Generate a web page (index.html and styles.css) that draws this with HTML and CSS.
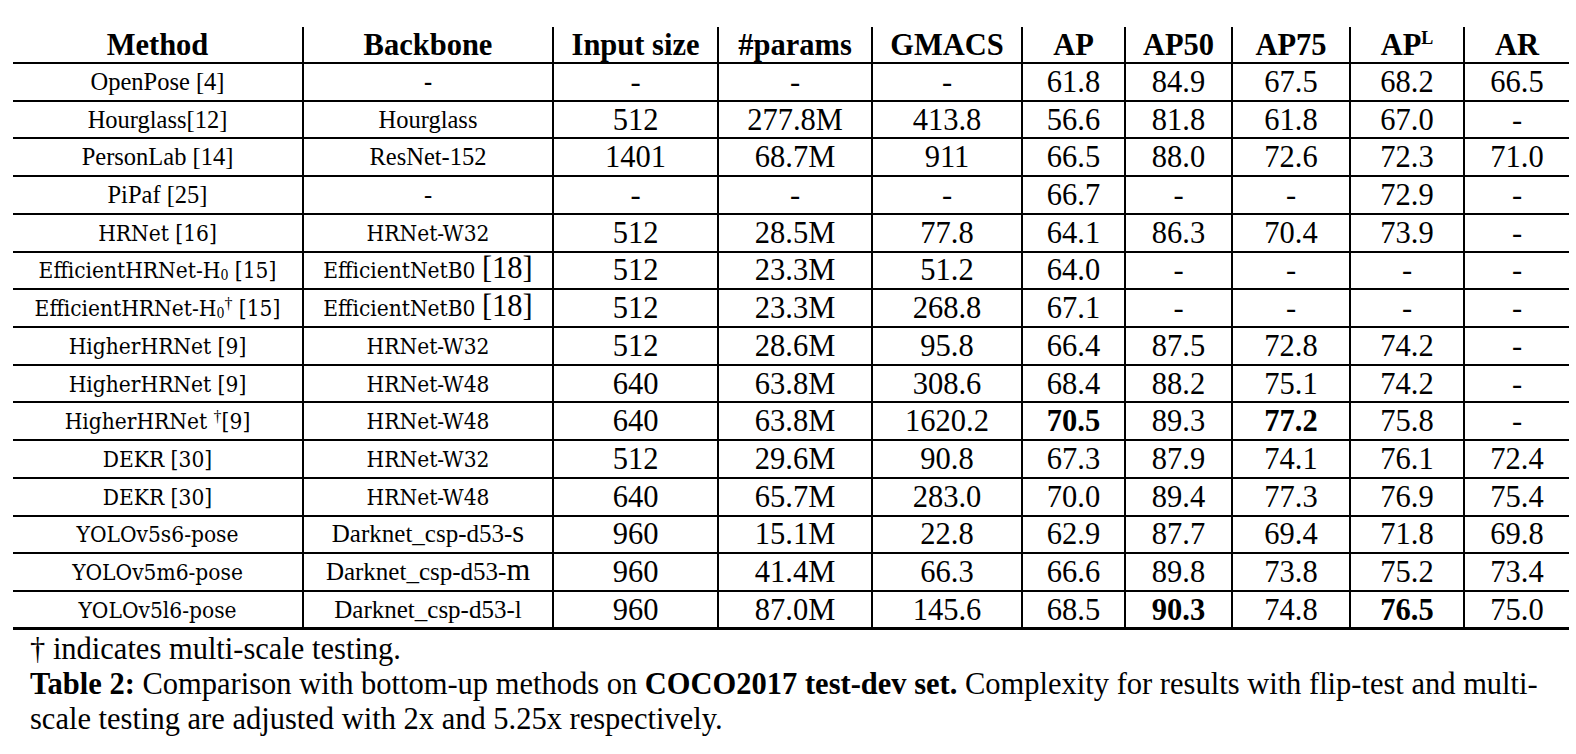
FILE: index.html
```html
<!DOCTYPE html>
<html lang="en">
<head>
<meta charset="utf-8">
<title>Table 2</title>
<link rel="stylesheet" href="styles.css">
</head>
<body>
<div class="page">
  <table class="results">
    <colgroup>
      <col class="c-method"><col class="c-backbone"><col class="c-input"><col class="c-params"><col class="c-gmacs">
      <col class="c-ap"><col class="c-ap50"><col class="c-ap75"><col class="c-apl"><col class="c-ar">
    </colgroup>
    <thead>
      <tr>
        <th>Method</th><th>Backbone</th><th>Input size</th><th>#params</th><th>GMACS</th>
        <th>AP</th><th>AP50</th><th>AP75</th><th>AP<sup class="supl">L</sup></th><th>AR</th>
      </tr>
    </thead>
    <tbody>
      <tr>
        <td class="tm">OpenPose [4]</td><td class="bdash">-</td>
        <td>-</td><td>-</td><td>-</td><td>61.8</td><td>84.9</td><td>67.5</td><td>68.2</td><td>66.5</td>
      </tr>
      <tr>
        <td class="tm">Hourglass[12]</td><td class="tm">Hourglass</td>
        <td>512</td><td>277.8M</td><td>413.8</td><td>56.6</td><td>81.8</td><td>61.8</td><td>67.0</td><td>-</td>
      </tr>
      <tr>
        <td class="tm">PersonLab [14]</td><td class="tm">ResNet-152</td>
        <td>1401</td><td>68.7M</td><td>911</td><td>66.5</td><td>88.0</td><td>72.6</td><td>72.3</td><td>71.0</td>
      </tr>
      <tr>
        <td class="tm">PiPaf [25]</td><td class="tm">-</td>
        <td>-</td><td>-</td><td>-</td><td>66.7</td><td>-</td><td>-</td><td>72.9</td><td>-</td>
      </tr>
      <tr>
        <td class="cb">HRNet [16]</td><td class="cb">HRNet-W32</td>
        <td>512</td><td>28.5M</td><td>77.8</td><td>64.1</td><td>86.3</td><td>70.4</td><td>73.9</td><td>-</td>
      </tr>
      <tr>
        <td class="cb">EfficientHRNet-H<sub class="sub0">0</sub> [15]</td><td class="cb">EfficientNetB0 <span class="big">[18]</span></td>
        <td>512</td><td>23.3M</td><td>51.2</td><td>64.0</td><td>-</td><td>-</td><td>-</td><td>-</td>
      </tr>
      <tr>
        <td class="cb">EfficientHRNet-H<sub class="sub0">0</sub><sup class="dag">†</sup> [15]</td><td class="cb">EfficientNetB0 <span class="big">[18]</span></td>
        <td>512</td><td>23.3M</td><td>268.8</td><td>67.1</td><td>-</td><td>-</td><td>-</td><td>-</td>
      </tr>
      <tr>
        <td class="cb">HigherHRNet [9]</td><td class="cb">HRNet-W32</td>
        <td>512</td><td>28.6M</td><td>95.8</td><td>66.4</td><td>87.5</td><td>72.8</td><td>74.2</td><td>-</td>
      </tr>
      <tr>
        <td class="cb">HigherHRNet [9]</td><td class="cb">HRNet-W48</td>
        <td>640</td><td>63.8M</td><td>308.6</td><td>68.4</td><td>88.2</td><td>75.1</td><td>74.2</td><td>-</td>
      </tr>
      <tr>
        <td class="cb">HigherHRNet <sup class="dag">†</sup>[9]</td><td class="cb">HRNet-W48</td>
        <td>640</td><td>63.8M</td><td>1620.2</td><td class="b">70.5</td><td>89.3</td><td class="b">77.2</td><td>75.8</td><td>-</td>
      </tr>
      <tr>
        <td class="cb">DEKR [30]</td><td class="cb">HRNet-W32</td>
        <td>512</td><td>29.6M</td><td>90.8</td><td>67.3</td><td>87.9</td><td>74.1</td><td>76.1</td><td>72.4</td>
      </tr>
      <tr>
        <td class="cb">DEKR [30]</td><td class="cb">HRNet-W48</td>
        <td>640</td><td>65.7M</td><td>283.0</td><td>70.0</td><td>89.4</td><td>77.3</td><td>76.9</td><td>75.4</td>
      </tr>
      <tr>
        <td class="cb">YOLOv5s6-pose</td><td class="dk">Darknet_csp-d53-<span class="big">s</span></td>
        <td>960</td><td>15.1M</td><td>22.8</td><td>62.9</td><td>87.7</td><td>69.4</td><td>71.8</td><td>69.8</td>
      </tr>
      <tr>
        <td class="cb">YOLOv5m6-pose</td><td class="dk">Darknet_csp-d53-<span class="big">m</span></td>
        <td>960</td><td>41.4M</td><td>66.3</td><td>66.6</td><td>89.8</td><td>73.8</td><td>75.2</td><td>73.4</td>
      </tr>
      <tr>
        <td class="cb">YOLOv5l6-pose</td><td class="dk">Darknet_csp-d53-l</td>
        <td>960</td><td>87.0M</td><td>145.6</td><td>68.5</td><td class="b">90.3</td><td>74.8</td><td class="b">76.5</td><td>75.0</td>
      </tr>
    </tbody>
  </table>
  <div class="caption">
    <p class="note">† indicates multi-scale testing.</p>
    <p class="cap"><b>Table 2:</b> Comparison with bottom-up methods on <b>COCO2017 test-dev set.</b> Complexity for results with flip-test and multi-scale testing are adjusted with 2x and 5.25x respectively.</p>
  </div>
</div>
</body>
</html>
```

FILE: styles.css
```css
html, body {
  margin: 0;
  padding: 0;
  background: #ffffff;
}

.page {
  padding: 27px 0 0 13px;
  font-family: "Liberation Serif", "Times New Roman", serif;
  color: #000;
}

.results {
  border-collapse: collapse;
  table-layout: fixed;
  width: 1556px;
}

.c-method { width: 290px; }
.c-backbone { width: 250px; }
.c-input { width: 165px; }
.c-params { width: 154px; }
.c-gmacs { width: 150px; }
.c-ap { width: 103px; }
.c-ap50 { width: 107px; }
.c-ap75 { width: 118px; }
.c-apl { width: 114px; }
.c-ar { width: 105px; }

.results th,
.results td {
  padding: 0;
  text-align: center;
  vertical-align: middle;
  white-space: nowrap;
  border-left: 2px solid #000;
  line-height: 32px;
}

.results th:first-child,
.results td:first-child {
  border-left: none;
}

.results thead tr {
  height: 36px;
}

.results th {
  font-size: 30.5px;
  font-weight: bold;
  border-bottom: 2px solid #000;
}

.results tbody tr {
  height: 37.73px;
}

.results td {
  font-size: 30.5px;
  border-bottom: 2px solid #000;
}

.results tbody tr:last-child td {
  border-bottom: 3px solid #000;
}

.results td.b {
  font-weight: bold;
}

.supl {
  font-size: 18px;
  vertical-align: 11px;
  line-height: 0;
}

.tm {
  font-size: 24.5px !important;
}

.bdash {
  font-size: 24.5px !important;
  font-weight: bold;
}

.cb {
  font-family: "DejaVu Serif", serif;
  font-stretch: condensed;
  font-size: 22.5px !important;
}

.dk {
  font-size: 25px !important;
}

.big {
  font-family: "Liberation Serif", serif;
  font-stretch: normal;
  font-size: 30.5px;
  line-height: 0;
}

.sub0 {
  font-size: 14px;
  vertical-align: -2px;
  line-height: 0;
}

.dag {
  font-family: "Liberation Serif", serif;
  font-size: 16px;
  vertical-align: 7px;
  line-height: 0;
}

.caption {
  width: 1545px;
  padding-top: 2px;
}

.caption p {
  margin: 0;
  font-size: 30.5px;
  line-height: 35px;
  padding-left: 17px;
}
```
